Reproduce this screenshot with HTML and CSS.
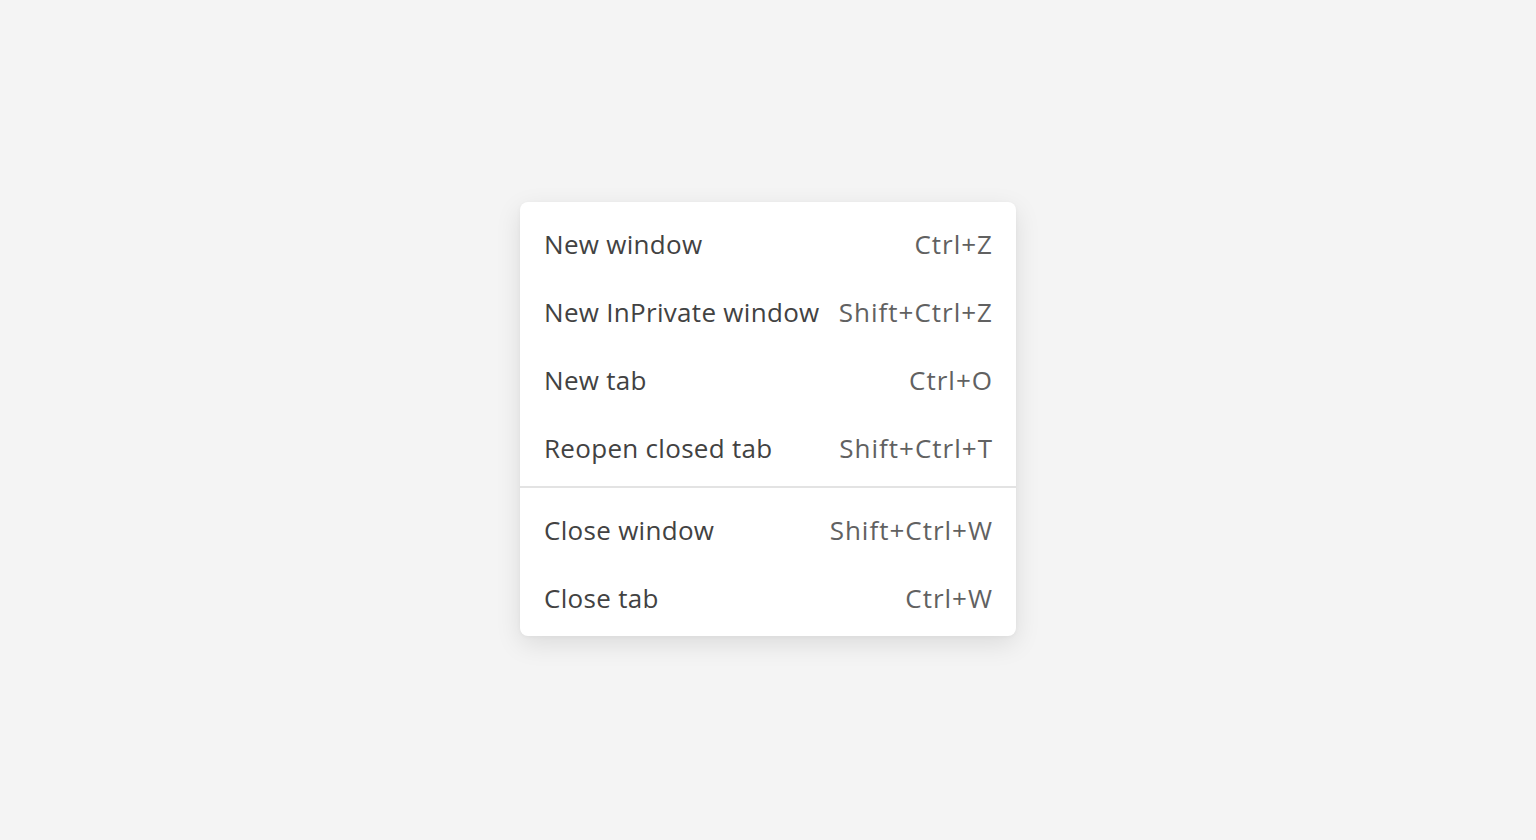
FILE: index.html
```html
<!DOCTYPE html>
<html lang="en">

<head>
    <meta charset="UTF-8">
    <meta name="viewport" content="width=device-width, initial-scale=1.0">
    <title>Menu</title>
    <link rel="stylesheet" href="styles.css">
</head>

<body>
    <div class="page">
        <div class="menu">
            <div class="group">
                <div class="item"><span class="label">New window</span><span class="key">Ctrl+Z</span></div>
                <div class="item"><span class="label">New InPrivate window</span><span class="key">Shift+Ctrl+Z</span></div>
                <div class="item"><span class="label">New tab</span><span class="key">Ctrl+O</span></div>
                <div class="item"><span class="label">Reopen closed tab</span><span class="key">Shift+Ctrl+T</span></div>
            </div>
            <div class="divider"></div>
            <div class="group">
                <div class="item"><span class="label">Close window</span><span class="key">Shift+Ctrl+W</span></div>
                <div class="item"><span class="label">Close tab</span><span class="key">Ctrl+W</span></div>
            </div>
        </div>
    </div>
</body>

</html>
```

FILE: styles.css
```css
* {
    margin: 0;
    padding: 0;
    box-sizing: border-box;
}

body {
    background: #f4f4f4;
    font-family: "Open Sans", "Noto Sans", sans-serif;
}

.page {
    height: 840px;
    padding-top: 202px;
    display: flex;
    justify-content: center;
}

.menu {
    width: 496px;
    height: 434px;
    padding: 6px 0;
    background: #fff;
    border-radius: 8px;
    box-shadow: 0 8px 26px rgba(0, 0, 0, 0.10), 0 1px 4px rgba(0, 0, 0, 0.04);
}

.item {
    height: 68px;
    padding: 4px 24px 0 24px;
    display: flex;
    align-items: center;
    justify-content: space-between;
    font-size: 26px;
    white-space: nowrap;
}

.label {
    color: #424242;
    letter-spacing: 0.3px;
}

.key {
    color: #616161;
    letter-spacing: 1px;
    margin-right: -1px;
}

.divider {
    height: 2px;
    margin: 6px 0;
    background: #e3e3e3;
}
```
